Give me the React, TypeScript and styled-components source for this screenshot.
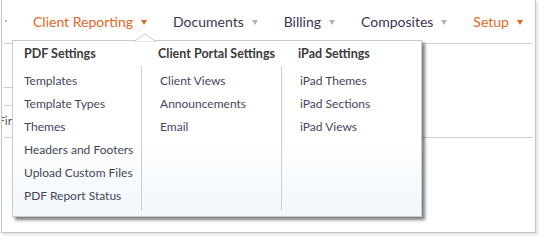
import React from "react";
import styled, { createGlobalStyle } from "styled-components";

const Global = createGlobalStyle`
  html, body { margin: 0; padding: 0; background: #ffffff; }
  body { font-family: Lato, "Liberation Sans", sans-serif; overflow: hidden; }
`;

const Page = styled.div`
  width: 545px;
  height: 242px;
  position: relative;
`;

const Frame = styled.div`
  position: relative;
  margin: -1px 0 0 1px;
  width: 533px;
  height: 232px;
  border: 1px solid #c6c6c6;
  box-shadow: 2px 2px 3px rgba(0, 0, 0, 0.12);
  background: #fff;
  overflow: hidden;
`;

const NavBar = styled.div`
  display: flex;
  align-items: center;
  height: 43px;
  margin: 0 2px 0 2px;
  border-bottom: 1px solid #cfcfcf;
  padding-left: 16px;
  position: relative;
`;

const EdgeMark = styled.span`
  position: absolute;
  left: 1px;
  top: 20px;
  width: 2px;
  height: 2px;
  background: #b8b8b8;
`;

const NavItem = styled.div<{ $active?: boolean }>`
  display: flex;
  align-items: center;
  gap: 8px;
  padding: 0 13px;
  font-size: 14px;
  color: ${(p) => (p.$active ? "#e4661f" : "#3b3350")};
  white-space: nowrap;
`;

const Caret = styled.span<{ $active?: boolean }>`
  width: 0;
  height: 0;
  border-left: 3.5px solid transparent;
  border-right: 3.5px solid transparent;
  border-top: 5px solid ${(p) => (p.$active ? "#e4661f" : "#b4b4b4")};
  margin-top: 2px;
`;

const Content = styled.div`
  margin: 0 2px;
`;

const Rule = styled.div<{ $top: number; $width?: string }>`
  margin-top: ${(p) => p.$top}px;
  width: ${(p) => p.$width || "100%"};
  border-top: 1px solid #cfcfcf;
`;

const RowText = styled.div`
  height: 30px;
  line-height: 30px;
  font-size: 12px;
  color: #555;
  margin-left: -6px;
`;

const Menu = styled.div`
  position: absolute;
  left: 10px;
  top: 40px;
  width: 408px;
  height: 175px;
  border: 1px solid #c9c9c9;
  background: linear-gradient(#ffffff 55%, #f1f7fc 100%);
  box-shadow: 3px 3px 3px rgba(0, 0, 0, 0.5);
  display: flex;
  z-index: 2;
`;

const Notch = styled.svg`
  position: absolute;
  left: 121px;
  top: -8px;
`;

const Column = styled.div<{ $first?: boolean }>`
  width: ${(p) => (p.$first ? "129px" : "141px")};
  display: flex;
  flex-direction: column;
`;

const Header = styled.div<{ $first?: boolean }>`
  padding: 1px 0 0 ${(p) => (p.$first ? "11px" : "17px")};
  line-height: 24px;
  font-size: 12.5px;
  font-weight: 700;
  color: #3a3a3a;
  white-space: nowrap;
`;

const List = styled.div<{ $first?: boolean }>`
  padding: 3px 0 3px ${(p) => (p.$first ? "11px" : "18px")};
  border-left: ${(p) => (p.$first ? "none" : "1px solid #d0d0d0")};
  height: 138px;
  display: flex;
  flex-direction: column;
`;

const Item = styled.div`
  line-height: 23px;
  height: 23px;
  font-size: 12px;
  color: #45465a;
  white-space: nowrap;
`;

const navItems = [
  { label: "Client Reporting", active: true },
  { label: "Documents" },
  { label: "Billing" },
  { label: "Composites" },
  { label: "Setup", active: true },
];

const columns = [
  {
    title: "PDF Settings",
    items: [
      "Templates",
      "Template Types",
      "Themes",
      "Headers and Footers",
      "Upload Custom Files",
      "PDF Report Status",
    ],
  },
  {
    title: "Client Portal Settings",
    items: ["Client Views", "Announcements", "Email"],
  },
  {
    title: "iPad Settings",
    items: ["iPad Themes", "iPad Sections", "iPad Views"],
  },
];

export default function App() {
  return (
    <Page>
      <Global />
      <Frame>
        <NavBar>
          <EdgeMark />
          {navItems.map((n) => (
            <NavItem key={n.label} $active={n.active}>
              {n.label}
              <Caret $active={n.active} />
            </NavItem>
          ))}
        </NavBar>
        <Content>
          <Rule $top={43} $width="160px" />
          <Rule $top={17} $width="160px" />
          <RowText>Firm</RowText>
          <Rule $top={1} />
        </Content>
        <Menu>
          <Notch width="22" height="9" viewBox="0 0 22 9">
            <polygon points="0,8.5 11,1 22,8.5" fill="#ffffff" stroke="#c9c9c9" strokeWidth="1" />
            <rect x="0.5" y="8.5" width="21" height="1" fill="#ffffff" />
          </Notch>
          {columns.map((c, i) => (
            <Column key={c.title} $first={i === 0}>
              <Header $first={i === 0}>{c.title}</Header>
              <List $first={i === 0}>
                {c.items.map((it) => (
                  <Item key={it}>{it}</Item>
                ))}
              </List>
            </Column>
          ))}
        </Menu>
      </Frame>
    </Page>
  );
}
